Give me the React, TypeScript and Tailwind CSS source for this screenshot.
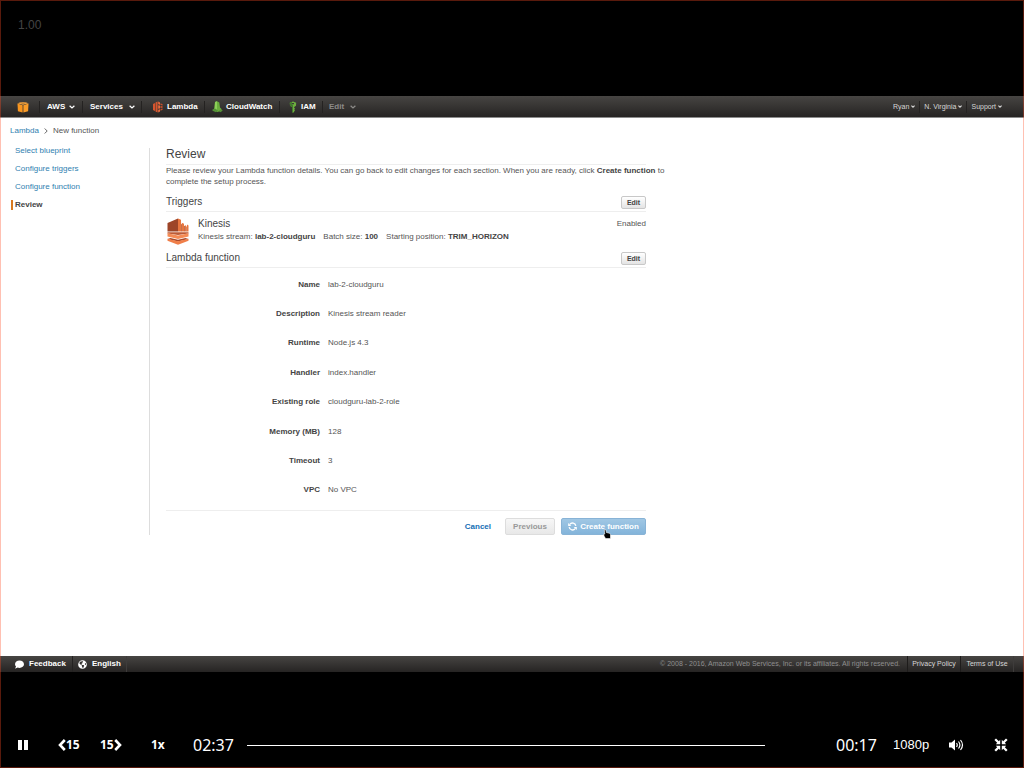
import React from "react";
import { FaComment, FaGlobeAmericas } from "react-icons/fa";

function Caret() {
  return (
    <svg viewBox="0 0 6 4" className="h-1 w-1.5 shrink-0" fill="none" stroke="currentColor" strokeWidth="1.3" aria-hidden="true">
      <path d="M.6.8 3 2.900 5.400.8" />
    </svg>
  );
}

function SmallCaret() {
  return (
    <svg viewBox="0 0 4 3" className="h-[3px] w-1 shrink-0" fill="none" stroke="currentColor" strokeWidth="1.1" aria-hidden="true">
      <path d="M.4.6 2 2.200 3.600.6" />
    </svg>
  );
}

function CubeIcon() {
  return (
    <svg viewBox="0 0 12 12" className="h-3 w-3" aria-hidden="true">
      <path d="M.5 2.200 3.500 1.200h5l3 1L6 3.800z" fill="#ffac45" />
      <path d="M.5 2.600 5.600 4.200v7.200L.9 10.300z" fill="#f8951f" />
      <path d="M11.500 2.600 6.400 4.200v7.200l4.700-1.100z" fill="#fb9c28" />
      <path d="M3.200 1.700 6 2.500l2.800-.8" stroke="#8a561c" strokeWidth=".5" fill="none" />
    </svg>
  );
}

function LambdaIcon() {
  return (
    <svg viewBox="0 0 10 12" className="h-3 w-2.5" aria-hidden="true">
      <path d="M0 3 2 2v8L0 9zM2.500 1.500 4.600.5v11l-2.100-1z" fill="#d5552e" />
      <path d="M5.200.5 7 1.500v2.200l-1.800-.4zM5.200 4.200 7 4.500v3l-1.800.3zM5.200 8.700 7 8.300v2.200l-1.800 1z" fill="#ee6b3c" />
      <path d="M7.500 2.200 9.600 3.200v1.300l-2.100-.4zM7.500 5l2.100.2v1.600L7.500 7zM7.500 8l2.100-.4v1.200l-2.100 1z" fill="#c9502c" />
    </svg>
  );
}

function CloudWatchIcon() {
  return (
    <svg viewBox="0 0 11 12" className="h-3 w-[11px]" aria-hidden="true">
      <path d="M3 1 5 .3l2.300 1.200.7 5L9.500 8v1.500L5.500 11 2 9z" fill="#6cae3e" />
      <path d="M3 1 5 .3v8.500L2 9l.8-2z" fill="#8bcf58" />
      <path d="M.5 8.500 3 7.600l3 1.800-2 1.800L.5 9.800zM6.500 10 9 8.500l1.800 1L8.500 11.300z" fill="#549137" />
    </svg>
  );
}

function KeyIcon() {
  return (
    <svg viewBox="0 0 8 12" className="h-3 w-2" aria-hidden="true">
      <path fillRule="evenodd" d="M4 .5 7.200 1.800 7 4.700 5.200 6v1l1 .8-1 .7.900.8-.9.8v.900L4 11.800 3 11V6L1 4.700.8 1.800zM3 2v1.200h2V2z" fill="#6cae3e" />
      <path d="M4 6v5.800L3 11V6L1 4.700.8 1.800 3 1v2.200l1 .8z" fill="#42792d" />
    </svg>
  );
}

function KinesisIcon() {
  return (
    <svg viewBox="0 0 24 28" className="h-7 w-6 shrink-0" aria-hidden="true">
      <path d="M1.500 6 12 1.500v13H1.500z" fill="#9d4528" />
      <path d="M12 1.500 15 2.700v11.800h-3zM15.800 5.800 18 6.800v7.700h-2.200zM18.800 8 20.500 9v5.500h-1.700zM21 7.500 22.500 8.500v6H21z" fill="#e8763f" />
      <path d="M15 7 15.800 7.300v7.200H15zM18 9h.8v5.500H18zM20.500 10h.5v4.500h-.5z" fill="#b5532f" />
      <path d="M1.500 15.300h21v1.200L12 18 1.500 16.500z" fill="#bd5a35" />
      <path d="M1.500 16.200 12 18.500l10.500-2.300v3.300L12 22 1.500 19.500z" fill="#f58b55" />
      <path d="M4.500 21 12 22.800 19.500 21l3 .9L12 24.500 1.500 21.900z" fill="#a9492b" />
      <path d="M1.500 21.800 12 24.300l10.500-2.500v1.900L12 27.800 1.500 23.700z" fill="#f07e48" />
    </svg>
  );
}

function RefreshIcon() {
  return (
    <svg viewBox="0 0 10 10" className="h-[9px] w-[9px]" fill="none" stroke="currentColor" strokeWidth="1.500" aria-hidden="true">
      <path d="M8.700 4.200A3.800 3.800 0 0 0 2 2.600M1.300 5.800A3.800 3.800 0 0 0 8 7.400" />
      <path d="M.2 1v3.500h3.500zM9.800 9V5.500H6.300z" fill="currentColor" stroke="none" />
    </svg>
  );
}

function HandCursor() {
  return (
    <svg viewBox="0 0 8 10" className="pointer-events-none absolute left-[41px] top-[10px] h-2.5 w-2" aria-hidden="true">
      <path d="M1.300.7h1.500l.6 2.800 3.300.8.800 1.300v4H2.600L1.200 7.200.5 5.300l1.300-.2z" fill="#000" stroke="#fff" strokeWidth=".6" />
    </svg>
  );
}

function SpeakerIcon() {
  return (
    <svg viewBox="0 0 16 14" className="h-3.5 w-4" aria-hidden="true">
      <path d="M1 4.500h2.500L7 1.500v11L3.500 9.500H1z" fill="#fff" />
      <path d="M8.500 5q1.500 2 0 4M10.500 3.500q2.800 3.500 0 7M12.500 2q4 5 0 10" fill="none" stroke="#fff" strokeWidth="1.200" />
    </svg>
  );
}

function ShrinkIcon() {
  return (
    <svg viewBox="0 0 14 14" className="h-3.5 w-3.5" aria-hidden="true">
      <path d="M6.200 6.200V1.800L4.800 3.200 2 .4.400 2l2.800 2.800-1.400 1.400zM7.800 6.200V1.800l1.400 1.400L12 .4 13.600 2l-2.800 2.800 1.400 1.400zM6.200 7.800v4.400l-1.400-1.400L2 13.600.4 12l2.800-2.800-1.400-1.400zM7.800 7.800v4.400l1.400-1.400 2.800 2.800 1.600-1.600-2.800-2.800 1.400-1.400z" fill="#fff" />
    </svg>
  );
}

function Skip({ back = false }: { back?: boolean }) {
  return (
    <svg viewBox="0 0 8 12" className="h-3 w-2" fill="none" stroke="#fff" strokeWidth="2.600" aria-hidden="true">
      <path d={back ? "M6.800 1 2 6l4.800 5" : "M1.200 1 6 6l-4.800 5"} />
    </svg>
  );
}

const navItem = "flex h-3 items-center border-l border-[#242221]";

function NavBar() {
  return (
    <nav className="flex h-[22px] items-center justify-between border-b border-[#8c8c8c] bg-linear-to-b from-[#474543] to-[#262423] text-[8px] leading-3 text-white">
      <div className="flex items-center font-bold">
        <a href="#home" aria-label="Home" className="mr-2.5 ml-[17px]"><CubeIcon /></a>
        <button className={`${navItem} w-[43px] gap-1 pl-[7px]`}>AWS <Caret /></button>
        <button className={`${navItem} w-[59px] gap-1.5 pl-[7px]`}>Services <Caret /></button>
        <a href="#lambda" className={`${navItem} w-[63px] gap-1 pl-[11px]`}><LambdaIcon />Lambda</a>
        <a href="#cloudwatch" className={`${navItem} w-[75px] gap-[3px] pl-[7px]`}><CloudWatchIcon />CloudWatch</a>
        <a href="#iam" className={`${navItem} w-[43px] gap-1 pl-[9px]`}><KeyIcon />IAM</a>
        <button className={`${navItem} gap-1.5 pl-1.5 text-[#8d8b89]`}>Edit <Caret /></button>
      </div>
      <div className="mr-[22px] flex items-center text-[7px] text-[#d6d6d6]">
        <button className="flex items-center gap-0.5">Ryan <SmallCaret /></button>
        <button className={`${navItem} ml-1 gap-0.5 pl-1`}>N. Virginia <SmallCaret /></button>
        <button className={`${navItem} ml-1 gap-0.5 pl-1`}>Support <SmallCaret /></button>
      </div>
    </nav>
  );
}

const steps = ["Select blueprint", "Configure triggers", "Configure function"];

const fields = [
  ["Name", "lab-2-cloudguru"],
  ["Description", "Kinesis stream reader"],
  ["Runtime", "Node.js 4.3"],
  ["Handler", "index.handler"],
  ["Existing role", "cloudguru-lab-2-role"],
  ["Memory (MB)", "128"],
  ["Timeout", "3"],
  ["VPC", "No VPC"],
];

function SectionHeader({ title }: { title: string }) {
  return (
    <div className="flex h-4 items-start justify-between border-b border-[#eee]">
      <h2 className="text-[10px] leading-3 text-[#444]">{title}</h2>
      <button className="h-[13px] w-[25px] rounded-xs border border-[#c8c8c8] bg-linear-to-b from-white to-[#e4e4e4] text-[7px] leading-[11px] font-bold text-[#444]">Edit</button>
    </div>
  );
}

function Review() {
  return (
    <section className="w-full max-w-[480px]">
      <h1 className="h-[17px] border-b border-[#eee] text-[12px] leading-3 text-[#444]">Review</h1>
      <p className="leading-[11px] whitespace-nowrap">
        Please review your Lambda function details. You can go back to edit changes for each section. When you are ready, click <b className="text-[#444]">Create function</b> to
        <br />
        complete the setup process.
      </p>
      <div className="pt-[9px]"><SectionHeader title="Triggers" /></div>
      <div className="flex h-10 items-start pt-[5px]">
        <KinesisIcon />
        <div className="ml-2 flex-1">
          <h3 className="text-[10px] leading-[14px] text-[#444]">Kinesis</h3>
          <div className="flex gap-2 leading-3">
            <span>Kinesis stream: <b className="text-[#444]">lab-2-cloudguru</b></span>
            <span>Batch size: <b className="text-[#444]">100</b></span>
            <span>Starting position: <b className="text-[#444]">TRIM_HORIZON</b></span>
          </div>
        </div>
        <span className="leading-[14px]">Enabled</span>
      </div>
      <SectionHeader title="Lambda function" />
      <dl className="mt-0.5 grid h-[235px] grid-rows-8">
        {fields.map(([name, value]) => (
          <div key={name} className="flex items-center gap-2">
            <dt className="w-[154px] text-right font-bold text-[#444]">{name}</dt>
            <dd>{value}</dd>
          </div>
        ))}
      </dl>
      <div className="mt-[5px] flex items-center justify-end border-t border-[#eee] pt-[7px] font-bold">
        <a href="#cancel" className="mr-3.5 text-[#146eb4]">Cancel</a>
        <button disabled className="mr-1.5 h-[17px] w-[50px] rounded-xs border border-[#ddd] bg-linear-to-b from-[#f7f7f7] to-[#e8e8e8] leading-3 text-[#999]">Previous</button>
        <button className="relative flex h-[17px] w-[85px] items-center justify-center gap-[3px] rounded-xs border border-[#88b3d6] bg-linear-to-b from-[#a0c7e4] to-[#83b4da] text-white">
          <RefreshIcon />
          Create function
          <HandCursor />
        </button>
      </div>
    </section>
  );
}

function Footer() {
  return (
    <footer className="flex h-4 items-center justify-between bg-linear-to-b from-[#474543] to-[#262423] text-[7px] text-[#d6d6d6]">
      <div className="flex h-full items-center pl-[15px] text-[8px] font-bold text-white">
        <button className="flex h-full w-[58px] items-center gap-[5px] border-r border-[#242221]"><FaComment className="h-[9px] w-[9px]" />Feedback</button>
        <button className="flex h-full w-[54px] items-center gap-[5px] border-r border-[#3e3c3b] pl-[5px]"><FaGlobeAmericas className="h-[9px] w-[9px]" />English</button>
      </div>
      <div className="flex h-full items-center pr-[10px]">
        <span className="pr-[7px] text-[#8f8f8f]">© 2008 - 2016, Amazon Web Services, Inc. or its affiliates. All rights reserved.</span>
        <a href="#privacy" className="flex h-full w-[53px] items-center justify-center border-l border-[#1e1c1b]">Privacy Policy</a>
        <a href="#terms" className="flex h-full w-[54px] items-center justify-center border-x border-l-[#1e1c1b] border-r-[#3e3c3b]">Terms of Use</a>
      </div>
    </footer>
  );
}

function PlayerControls() {
  return (
    <div className="flex h-24 items-center pt-[50px] pr-4 pl-[18px] font-['Noto_Sans',sans-serif] text-white">
      <button aria-label="Pause" className="flex w-10 gap-0.5"><span className="h-2.5 w-1 bg-white" /><span className="h-2.5 w-1 bg-white" /></button>
      <button className="flex w-[42px] items-center text-[12px] font-bold"><Skip back />15</button>
      <button className="flex w-[51px] items-center text-[12px] font-bold">15<Skip /></button>
      <button className="w-[42px] text-left text-[12px] font-bold">1x</button>
      <time className="w-[54px] text-[16px]">02:37</time>
      <div className="h-px flex-1 bg-white" role="progressbar" aria-label="Playback" />
      <time className="ml-[71px] w-[57px] text-[16px]">00:17</time>
      <button className="w-[55px] text-left font-['Liberation_Sans',sans-serif] text-[13px]">1080p</button>
      <button aria-label="Volume" className="w-[46px]"><SpeakerIcon /></button>
      <button aria-label="Exit full screen"><ShrinkIcon /></button>
    </div>
  );
}

export default function App() {
  return (
    <div className="relative flex min-h-screen flex-col bg-black font-['Liberation_Sans',Arial,sans-serif]">
      <div className="h-24 pt-[18px] pl-[18px] text-[12px] leading-[14px] text-[#444]">1.00</div>
      <NavBar />
      <main className="flex-1 bg-white text-[8px] leading-3 text-[#555]">
        <div className="flex items-center gap-[5px] pt-[7px] pl-[10px]">
          <a href="#lambda" className="text-[#2f80b0]">Lambda</a>
          <svg viewBox="0 0 4 6" className="h-1.5 w-1" fill="none" stroke="#555" strokeWidth=".9" aria-hidden="true"><path d="m.7.5 2.500 2.500L.7 5.500" /></svg>
          <span>New function</span>
        </div>
        <div className="mt-[11px] flex">
          <aside className="flex h-[387px] w-[150px] shrink-0 flex-col gap-3 border-r border-[#ddd] pl-[11px] leading-[6px]">
            {steps.map((step) => (
              <a key={step} href="#step" className="pl-1 text-[#2f80b0]">{step}</a>
            ))}
            <div className="-mt-0.5 border-l-2 border-[#d9791f] pl-0.5 leading-[10px] font-bold text-[#444]">Review</div>
          </aside>
          <div className="flex-1 pr-4 pl-4"><Review /></div>
        </div>
      </main>
      <Footer />
      <PlayerControls />
      <div className="pointer-events-none absolute inset-0 border border-[#ff4a22]/35" />
    </div>
  );
}
